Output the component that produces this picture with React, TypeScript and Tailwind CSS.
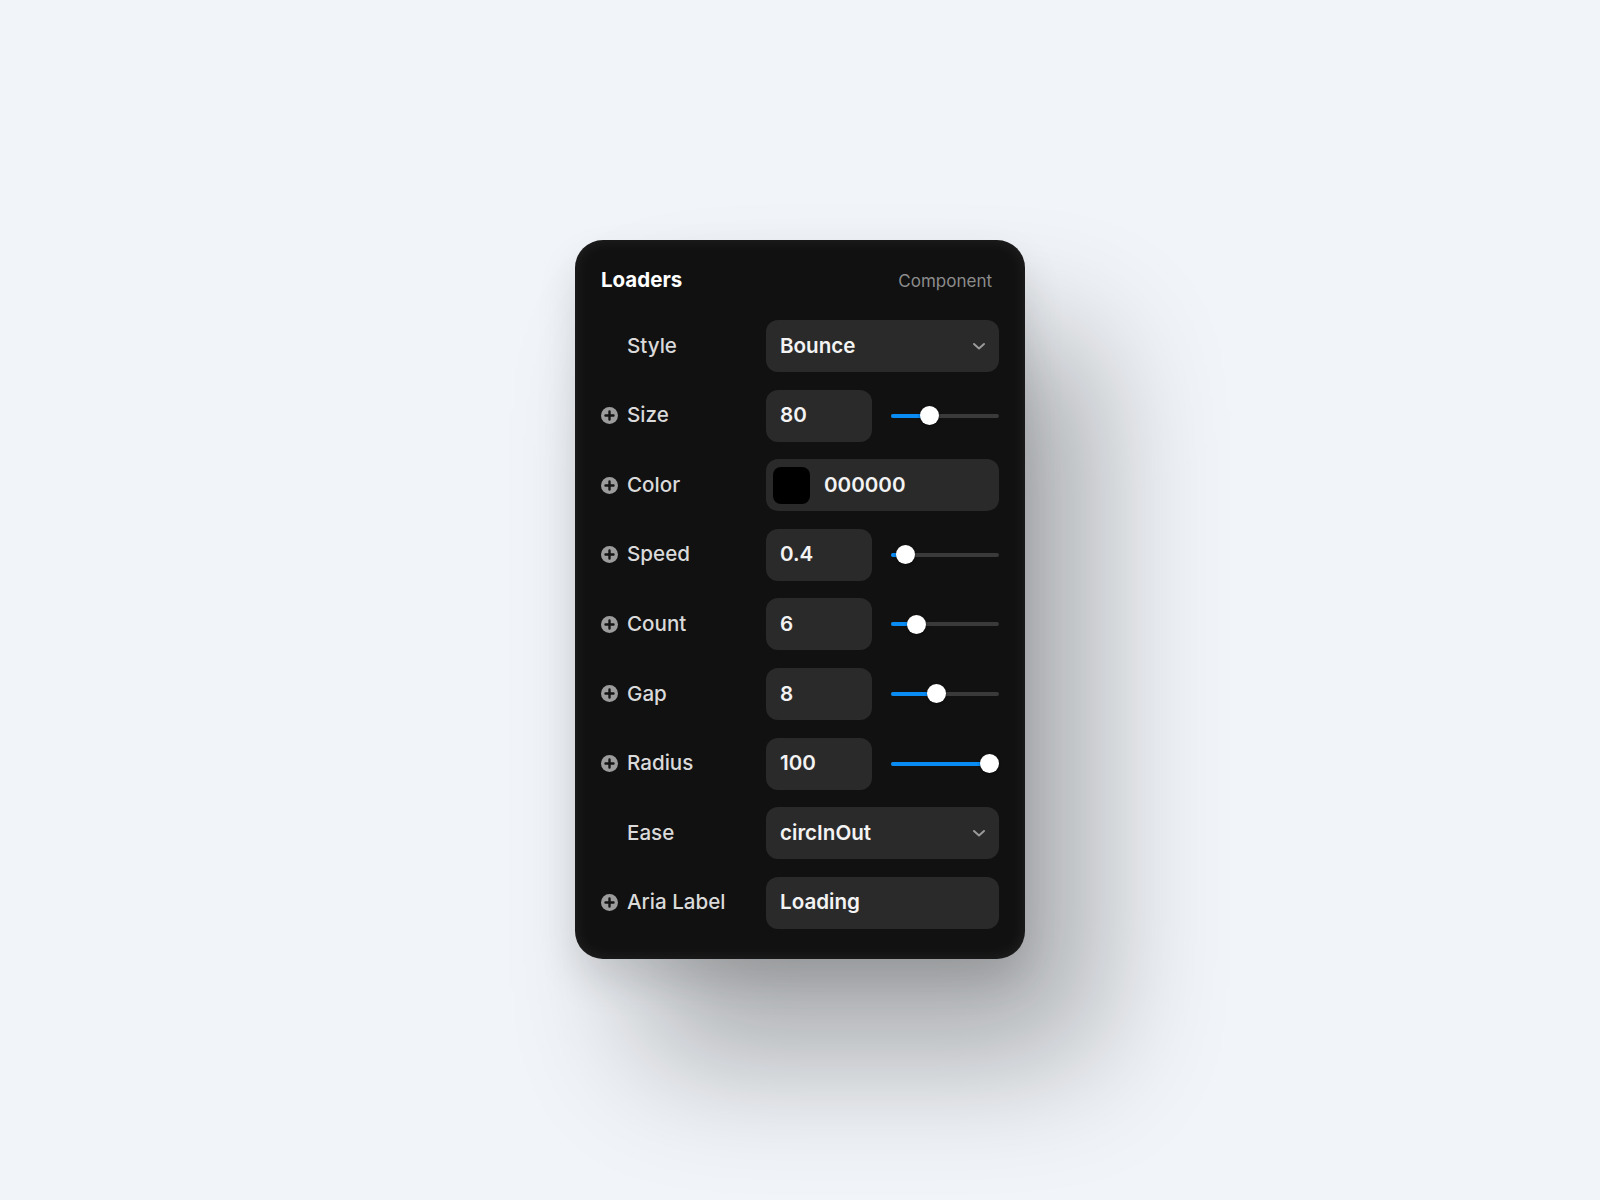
import React from 'react';

type Row =
  | { kind: 'select'; label: string; value: string; plus?: boolean }
  | { kind: 'slider'; label: string; value: string; pct: number; plus?: boolean }
  | { kind: 'color'; label: string; value: string; plus?: boolean }
  | { kind: 'text'; label: string; value: string; plus?: boolean };

const rows: Row[] = [
  { kind: 'select', label: 'Style', value: 'Bounce' },
  { kind: 'slider', label: 'Size', value: '80', pct: 33, plus: true },
  { kind: 'color', label: 'Color', value: '000000', plus: true },
  { kind: 'slider', label: 'Speed', value: '0.4', pct: 6, plus: true },
  { kind: 'slider', label: 'Count', value: '6', pct: 18, plus: true },
  { kind: 'slider', label: 'Gap', value: '8', pct: 40, plus: true },
  { kind: 'slider', label: 'Radius', value: '100', pct: 100, plus: true },
  { kind: 'select', label: 'Ease', value: 'circInOut' },
  { kind: 'text', label: 'Aria Label', value: 'Loading', plus: true },
];

function PlusIcon() {
  return (
    <svg width="17" height="17" viewBox="0 0 17 17" className="shrink-0">
      <circle cx="8.5" cy="8.5" r="8.5" fill="#9c9c9c" />
      <path d="M8.5 4.5v8M4.5 8.5h8" stroke="#141414" strokeWidth="2.4" strokeLinecap="round" />
    </svg>
  );
}

function Chevron() {
  return (
    <svg width="16" height="16" viewBox="0 0 16 16">
      <path d="M3 6l5 4.5L13 6" fill="none" stroke="#9a9a9a" strokeWidth="2" strokeLinecap="round" strokeLinejoin="round" />
    </svg>
  );
}

function Slider({ pct }: { pct: number }) {
  // thumb center moves between 9px and (width - 9px)
  const center = `calc(9.5px + (100% - 19px) * ${pct / 100})`;
  return (
    <div className="relative h-[19px] flex-1 flex items-center">
      <div className="h-[4px] w-full rounded-full bg-[#3a3a3a]" />
      <div className="absolute left-0 h-[4px] rounded-full bg-[#0a8cf5]" style={{ width: center }} />
      <div
        className="absolute top-0 h-[19px] w-[19px] -ml-[9.5px] rounded-full bg-white shadow-[0_1px_3px_rgba(0,0,0,0.4)]"
        style={{ left: center }}
      />
    </div>
  );
}

function Field({ row }: { row: Row }) {
  const field = 'h-[52px] rounded-[12px] bg-[#2a2a2a] flex items-center text-[20.6px] font-semibold text-[#f3f3f3]';
  if (row.kind === 'select') {
    return (
      <div className={`${field} flex-1 pl-[14px] pr-[12px] justify-between`}>
        <span>{row.value}</span>
        <Chevron />
      </div>
    );
  }
  if (row.kind === 'slider') {
    return (
      <div className="flex-1 flex items-center gap-[19px]">
        <div className={`${field} w-[106px] pl-[14px]`}>{row.value}</div>
        <Slider pct={row.pct} />
      </div>
    );
  }
  if (row.kind === 'color') {
    return (
      <div className={`${field} flex-1 pl-[7px] gap-[14px]`}>
        <div className="h-[37px] w-[37px] rounded-[8px] bg-black" />
        <span>{row.value}</span>
      </div>
    );
  }
  return <div className={`${field} flex-1 pl-[14px]`}>{row.value}</div>;
}

export default function App() {
  return (
    <div
      className="min-h-screen w-full bg-[#f1f4f8] flex justify-center pt-[240px]"
      style={{ fontFamily: 'Inter, "Noto Sans", sans-serif' }}
    >
      <div className="w-[450px] h-[719px] rounded-[28px] bg-[#111111] pt-[26px] px-[26px] shadow-[inset_0_0_16px_rgba(255,255,255,0.08),70px_100px_130px_rgba(0,0,0,0.3),0_20px_40px_rgba(0,0,0,0.12)]">
        <div className="h-[28px] flex items-center justify-between pr-[7px] mb-[26px]">
          <span className="text-[20.5px] font-bold text-white">Loaders</span>
          <span className="text-[17px] text-[#8c8c8c] pt-[3px]">Component</span>
        </div>
        <div className="flex flex-col gap-[17.6px]">
          {rows.map((row) => (
            <div key={row.label} className="flex items-center h-[52px]">
              <div className="w-[165px] flex items-center gap-[9px]">
                {row.plus ? <PlusIcon /> : <span className="w-[17px]" />}
                <span className="text-[20.6px] font-medium text-[#dadada]">{row.label}</span>
              </div>
              <Field row={row} />
            </div>
          ))}
        </div>
      </div>
    </div>
  );
}
